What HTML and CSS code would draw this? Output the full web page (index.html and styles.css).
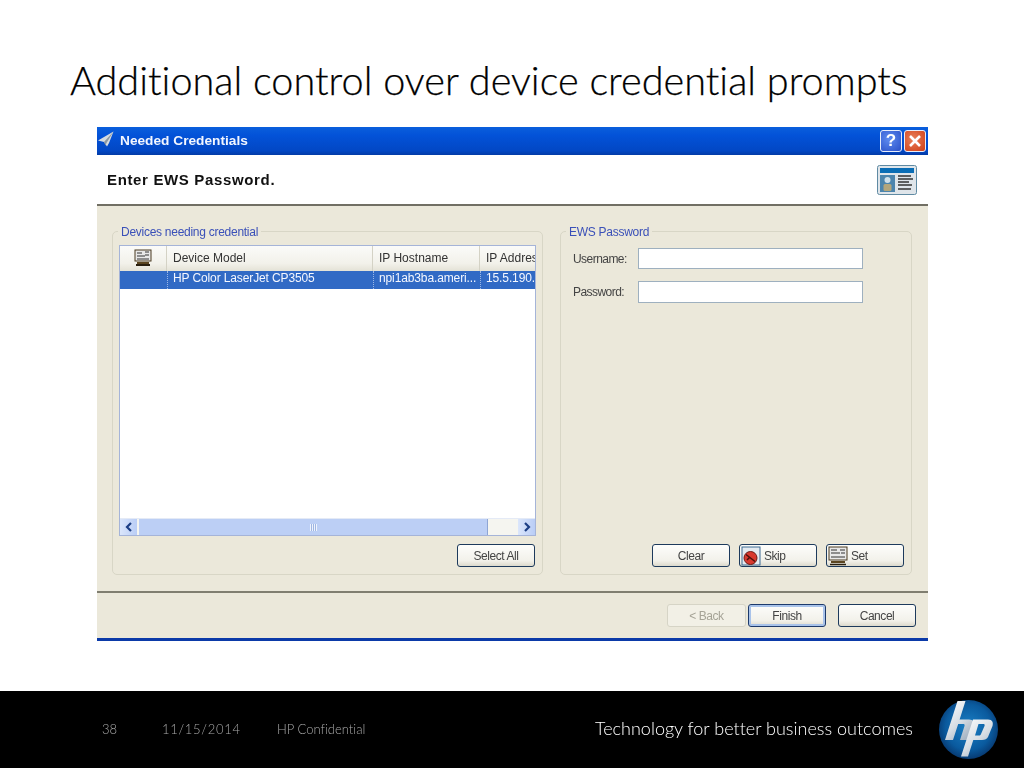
FILE: index.html
```html
<!DOCTYPE html>
<html lang="en">
<head>
<meta charset="utf-8">
<title>Additional control over device credential prompts</title>
<link rel="stylesheet" href="styles.css">
</head>
<body>
<div class="slide">
  <h1 class="slide-title">Additional control over device credential prompts</h1>
  <main class="dialog">
    <div class="titlebar">
      <svg class="tb-icon" width="18" height="20" viewBox="0 0 18 20"><path d="M16.500.500 1 9.500l6 1.500 3 4.500 2-3.500z" fill="#d5dbe0"/><path d="M16.500.500 7 11l1.500 3.500 1-2.500z" fill="#8b97a3"/></svg>
      <span class="tb-text">Needed Credentials</span>
      <span class="tb-btn tb-help">?</span>
      <span class="tb-btn tb-close">
        <svg width="14" height="14" viewBox="0 0 14 14"><path d="M2 2l10 10M12 2 2 12" stroke="#fff" stroke-width="2.600"/></svg>
      </span>
    </div>
    <div class="head">
      <span class="head-text">Enter EWS Password.</span>
      <svg class="head-icon" width="40" height="30" viewBox="0 0 40 30">
        <rect x="0.500" y="0.500" width="39" height="29" rx="2" fill="#dfe5ea" stroke="#5f8aa3"/>
        <rect x="3" y="3" width="34" height="5" fill="#0a6db5"/>
        <rect x="3" y="10" width="15" height="17" fill="#4c85ad"/>
        <circle cx="10.500" cy="15" r="3" fill="#cfe0ea"/>
        <rect x="6.500" y="19" width="8" height="7" rx="1.500" fill="#b3a67c"/>
        <path d="M21 11h13M21 14h15M21 17h11M21 20h14M21 24h13" stroke="#333" stroke-width="1.600"/>
      </svg>
    </div>
    <div class="body">
      <section class="group group-left">
        <span class="legend">Devices needing credential</span>
        <div class="list">
          <div class="list-head">
            <div class="col col-icon">
              <svg width="18" height="18" viewBox="0 0 18 18"><rect x="1" y="1" width="16" height="11" fill="#e8e8e8" stroke="#4a3a20"/><path d="M3 4h5M3 7h8M11 3h4M11 6h4M3 10h12" stroke="#333"/><path d="M3 13h12v2H3z" fill="#5b4520"/><path d="M2 16h14" stroke="#2a2010" stroke-width="2"/></svg>
            </div>
            <div class="col col-model">Device Model</div>
            <div class="col col-host">IP Hostname</div>
            <div class="col col-addr">IP Address</div>
          </div>
          <div class="list-row">
            <div class="cell col-icon"></div>
            <div class="cell col-model">HP Color LaserJet CP3505</div>
            <div class="cell col-host">npi1ab3ba.ameri...</div>
            <div class="cell col-addr">15.5.190.2</div>
          </div>
          <div class="list-fill"></div>
          <div class="hscroll">
            <span class="sb-btn">
              <svg width="8" height="10" viewBox="0 0 8 10"><path d="M6 1 2 5l4 4" fill="none" stroke="#1d3f85" stroke-width="2.200"/></svg>
            </span>
            <span class="sb-thumb"><span class="sb-grip"></span></span>
            <span class="sb-track"></span>
            <span class="sb-btn">
              <svg width="8" height="10" viewBox="0 0 8 10"><path d="M2 1l4 4-4 4" fill="none" stroke="#1d3f85" stroke-width="2.200"/></svg>
            </span>
          </div>
        </div>
        <div class="group-actions">
          <button class="btn btn-wide" type="button">Select All</button>
        </div>
      </section>
      <section class="group group-right">
        <span class="legend">EWS Password</span>
        <div class="fields">
          <div class="field field-user">
            <label class="field-label">Username:</label>
            <span class="input"></span>
          </div>
          <div class="field field-pass">
            <label class="field-label">Password:</label>
            <span class="input input-tall"></span>
          </div>
        </div>
        <div class="right-actions">
          <button class="btn" type="button">Clear</button>
          <button class="btn btn-icon" type="button">
            <svg width="20" height="20" viewBox="0 0 20 20"><rect x="1" y="1" width="18" height="18" fill="#e4eaf0" stroke="#3c6a92"/><circle cx="9.500" cy="12" r="6.500" fill="#d8392f" stroke="#6e1a14"/><path d="M5 8.500l9 7M6 14l3-3" stroke="#4a100c" stroke-width="1.500"/></svg>
            <span>Skip</span>
          </button>
          <button class="btn btn-icon" type="button">
            <svg width="20" height="20" viewBox="0 0 20 20"><rect x="1" y="1" width="18" height="13" fill="#e8e8e8" stroke="#4a3a20"/><path d="M3 4h6M3 7h9M12 4h5M13 7h4M3 11h14" stroke="#333"/><path d="M3 15h14v2H3z" fill="#5b4520"/><path d="M2 18.500h16" stroke="#2a2010" stroke-width="1.500"/></svg>
            <span>Set</span>
          </button>
        </div>
      </section>
    </div>
    <div class="foot">
      <button class="btn btn-disabled" type="button">&lt; Back</button>
      <button class="btn btn-default" type="button">Finish</button>
      <button class="btn btn-cancel" type="button">Cancel</button>
    </div>
  </main>
  <footer class="bar">
    <span class="meta meta-num">38</span>
    <span class="meta meta-date">11/15/2014</span>
    <span class="meta meta-conf">HP Confidential</span>
    <span class="tagline">Technology for better business outcomes</span>
    <svg class="logo" width="62" height="62" viewBox="0 0 62 62">
      <defs>
        <radialGradient id="disc" cx="0.500" cy="0.460" r="0.540">
          <stop offset="0" stop-color="#1a80c6"/>
          <stop offset="0.720" stop-color="#0a5a9e"/>
          <stop offset="1" stop-color="#073a72"/>
        </radialGradient>
        <linearGradient id="mark" x1="0" y1="0" x2="0.700" y2="1">
          <stop offset="0" stop-color="#ffffff"/>
          <stop offset="0.600" stop-color="#d6dde4"/>
          <stop offset="1" stop-color="#a3b2c2"/>
        </linearGradient>
      </defs>
      <circle cx="30.500" cy="30.500" r="29.500" fill="url(#disc)"/>
      <path d="M19.500 2H27.500L21.600 20.500H31C35.500 20.500 37 23.500 35.800 27L29.500 41H22L26.500 27C27 25.500 26.300 25 25 25H20.200L15 41H7Z" fill="url(#mark)"/>
      <path fill-rule="evenodd" d="M35 20.500H50C54.500 20.500 55.500 23.500 54.500 27L50 38C49 40 47 41 44 41H35.300L30 57.500H23ZM37 36.500H41C42 36.500 42.500 36 43 35L46.500 27C47 25.500 46.500 25 45 25H40.500Z" fill="url(#mark)"/>
    </svg>
  </footer>
</div>
</body>
</html>
```
FILE: styles.css
```css
* { box-sizing: border-box; }
html, body { margin: 0; padding: 0; }
body { background: #fff; }

.slide {
  width: 1024px;
  height: 768px;
  display: flex;
  flex-direction: column;
  overflow: hidden;
  background: #fff;
}
.slide-title {
  margin: 0;
  height: 127px;
  padding: 54px 0 0 70px;
  font: 300 39.650px/52px "Lato", sans-serif;
  font-variant-ligatures: none;
  -webkit-text-stroke: 0.250px #000;
  color: #000;
  white-space: nowrap;
}

.dialog {
  width: 831px;
  height: 514px;
  margin-left: 97px;
  display: flex;
  flex-direction: column;
  font: 12px/16px "Liberation Sans", Arial, sans-serif;
  color: #333;
  background: #ece9d8;
  filter: blur(0.350px);
}
.titlebar {
  height: 28px;
  flex: none;
  display: flex;
  align-items: center;
  padding: 0 2px 0 0;
  background: linear-gradient(#0a5fdc, #0352d8 30%, #0247c4 85%, #033ba6);
}
.tb-icon { flex: none; }
.tb-text {
  margin-left: 5px;
  flex: 1;
  font: 700 13.700px/18px "Liberation Sans", Arial, sans-serif;
  color: #f2f6ff;
}
.tb-btn {
  width: 22px;
  height: 22px;
  margin-left: 2px;
  border: 1px solid #e8eefb;
  border-radius: 3px;
  display: flex;
  align-items: center;
  justify-content: center;
  color: #fff;
  font: 700 17px/20px "Liberation Sans", Arial, sans-serif;
}
.tb-help { background: radial-gradient(circle at 40% 40%, #5f8cf0, #2a50c8); }
.tb-close { background: radial-gradient(circle at 40% 40%, #e9805a, #cf3d16); }

.head {
  height: 49px;
  flex: none;
  display: flex;
  align-items: center;
  justify-content: space-between;
  padding: 0 11px 0 10px;
  background: #fff;
}
.head-text {
  font: 700 15px/20px "Liberation Sans", Arial, sans-serif;
  color: #111;
  letter-spacing: 0.650px;
}

.body {
  height: 389px;
  flex: none;
  display: flex;
  gap: 17px;
  padding: 25px 16px 16px 15px;
  border-top: 2px solid #716f64;
  border-bottom: 2px solid #807e70;
  box-shadow: 0 1px 0 #fff;
  background: #ebe8da;
}
.group {
  position: relative;
  border: 1px solid #d8d6c6;
  border-radius: 5px;
  flex: none;
  display: flex;
  flex-direction: column;
}
.group-left { width: 431px; padding: 13px 6px 7px 6px; }
.group-right { width: 352px; padding: 16px 7px 7px 12px; }
.legend {
  position: absolute;
  top: -8px;
  left: 5px;
  padding: 0 3px;
  background: #ebe8da;
  color: #3a50b8;
  font-size: 12px;
  letter-spacing: -0.270px;
  line-height: 16px;
}

.list {
  height: 291px;
  flex: none;
  display: flex;
  flex-direction: column;
  border: 1px solid #a5b4d8;
  background: #fff;
  overflow: hidden;
}
.list-head {
  height: 25px;
  flex: none;
  display: flex;
  background: linear-gradient(#fbfbf9, #f2f1ea 70%, #e4e2d6);
}
.col, .cell {
  flex: none;
  white-space: nowrap;
  overflow: hidden;
  padding-left: 6px;
  line-height: 25px;
}
.col { border-right: 1px solid #d4d2c5; }
.col-icon { width: 47px; padding: 3px 0 0 14px; line-height: 0; }
.col-model { width: 206px; }
.col-host { width: 107px; }
.col-addr { flex: 1; border-right: 0; }
.list-row {
  height: 18px;
  flex: none;
  display: flex;
  background: #316ac5;
  color: #f4f7ff;
  letter-spacing: -0.120px;
}
.cell {
  line-height: 15px;
  padding-left: 5px;
  border-left: 1px dotted #9db8e6;
}
.cell.col-icon { border-left: 0; }
.list-fill { flex: 1; }
.hscroll {
  height: 17px;
  flex: none;
  display: flex;
  align-items: stretch;
  background: #f5f5f0;
  border-top: 1px solid #e4eaf6;
}
.sb-btn {
  width: 17px;
  flex: none;
  display: flex;
  align-items: center;
  justify-content: center;
  background: linear-gradient(90deg, #dbe6fb, #b9cdf6);
}
.sb-thumb {
  width: 349px;
  flex: none;
  margin-left: 2px;
  display: flex;
  align-items: center;
  justify-content: center;
  background: #bccff5;
  border-right: 1px solid #8ea5d4;
}
.sb-grip {
  width: 7px;
  height: 7px;
  background: repeating-linear-gradient(90deg, #eef3fd 0 1px, #9fb6e2 1px 2px);
}
.sb-track { flex: 1; }

.group-actions {
  display: flex;
  justify-content: flex-end;
  margin-top: 8px;
  padding-right: 1px;
}
.btn {
  width: 78px;
  height: 23px;
  padding: 0;
  border: 1px solid #1d3a5c;
  border-radius: 3px;
  background: linear-gradient(#fdfdfb, #f2f1ea 75%, #dcd9cc);
  color: #444;
  font: 12px/16px "Liberation Sans", Arial, sans-serif;
  letter-spacing: -0.450px;
  display: flex;
  align-items: center;
  justify-content: center;
}
.fields { flex: 1; }
.field { display: flex; align-items: center; }
.field-user { height: 21px; }
.field-pass { height: 22px; margin-top: 12px; }
.field-label { width: 65px; flex: none; color: #444; letter-spacing: -0.550px; }
.input {
  width: 225px;
  height: 100%;
  flex: none;
  background: #fff;
  border: 1px solid #9eb0bf;
}
.right-actions {
  display: flex;
  justify-content: flex-end;
  gap: 9px;
  margin-top: auto;
}
.btn-icon { justify-content: flex-start; gap: 3px; padding-left: 1px; }

.foot {
  flex: 1;
  display: flex;
  align-items: flex-start;
  padding: 11px 12px 0 0;
  justify-content: flex-end;
  border-bottom: 3px solid #0b3aa8;
  background: #ebe8da;
}
.btn-disabled {
  width: 79px;
  background: #f2f0e6;
  border-color: #d6d4c6;
  color: #a5a396;
}
.btn-default {
  margin-left: 2px;
  border-color: #1d3a6c;
  box-shadow: inset 0 0 0 2px #a9c3ea;
}
.btn-cancel { margin-left: 12px; }

.bar {
  margin-top: 50px;
  height: 77px;
  flex: none;
  display: flex;
  align-items: center;
  background: #000;
  color: #a8a8a8;
  padding-left: 102px;
}
.meta {
  font: 300 13px/18px "Lato", sans-serif;
  font-variant-ligatures: none;
  margin-bottom: 2px;
  white-space: nowrap;
  filter: grayscale(1);
}
.meta-num { width: 60px; flex: none; }
.meta-date { width: 115px; flex: none; letter-spacing: 0.700px; }
.meta-conf { width: 318px; flex: none; }
.tagline {
  width: 343px;
  flex: none;
  color: #fff;
  font: 300 18px/22px "Lato", sans-serif;
  font-variant-ligatures: none;
  margin-bottom: 4px;
  white-space: nowrap;
  filter: grayscale(1);
}
.logo { flex: none; }
```
